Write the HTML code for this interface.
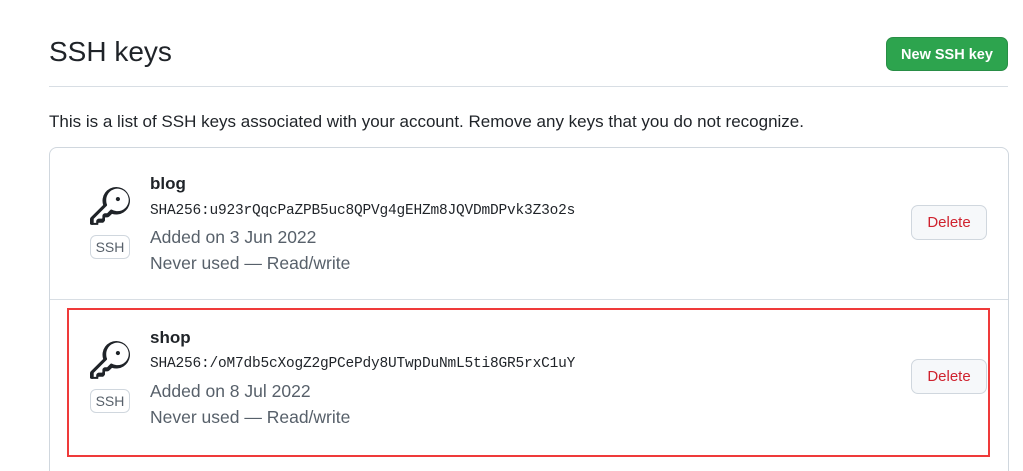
<!DOCTYPE html>
<html><head><style>
html,body{margin:0;background:#fff;font-family:"Liberation Sans",sans-serif;color:#1f2328;width:1023px;height:471px;overflow:hidden;position:relative}
.a{position:absolute}
h1{position:absolute;left:49px;top:36px;margin:0;font-weight:400;font-size:28px}
.btn{position:absolute;left:886px;top:37px;width:122px;height:34px;background:#2da44e;border-radius:7px;color:#fff;font-weight:bold;font-size:14.5px;text-align:center;line-height:34px;border:1px solid #298e46;box-sizing:border-box}
.hr{left:49px;top:86px;width:959px;height:1px;background:#d8dee4}
.p{left:49px;top:112px;font-size:17px}
.box{left:49px;top:147px;width:958px;height:340px;border:1px solid #d0d7de;border-radius:8px}
.sep{left:50px;top:299px;width:958px;height:1px;background:#d8dee4}
.name{font-weight:bold;font-size:17px}
.sha{font-family:"Liberation Mono",monospace;font-size:14.5px;letter-spacing:-0.2px}
.g{font-size:17.5px;color:#57606a}
.ssh{width:38px;height:22px;border:1px solid #d0d7de;border-radius:6px;font-size:14px;color:#57606a;text-align:center;line-height:22px}
.del{width:74px;height:33px;border:1px solid #d0d7de;border-radius:7px;background:#f6f8fa;color:#cf222e;font-size:15px;text-align:center;line-height:33px}
.red{left:67px;top:308px;width:919px;height:145px;border:2px solid #ef3a3a}
</style></head><body>
<h1>SSH keys</h1>
<div class="btn">New SSH key</div>
<div class="a hr"></div>
<div class="a p">This is a list of SSH keys associated with your account. Remove any keys that you do not recognize.</div>
<div class="a box"></div>
<div class="a sep"></div>
<svg class="a" style="left:90px;top:187px" width="40" height="40" viewBox="0 0 24 24"><path fill="#1f2328" d="M16.75 8.5a1.25 1.25 0 1 0 0-2.5 1.25 1.25 0 0 0 0 2.5Z"/><path fill="#1f2328" d="M15.75 0a8.25 8.25 0 1 1-2.541 16.101l-1.636 1.636a1.744 1.744 0 0 1-1.237.513H9.25a.25.25 0 0 0-.25.25v1.448a.876.876 0 0 1-.256.62l-.62.62a.876.876 0 0 1-.62.256H5.25a.25.25 0 0 0-.25.25v.75a.25.25 0 0 1-.25.25H1.75A1.75 1.75 0 0 1 0 22.25v-2.836c0-.464.185-.908.513-1.236l7.386-7.388A8.249 8.249 0 0 1 15.75 0ZM9.75 8.250c0 .797.155 1.556.437 2.251a.75.75 0 0 1-.165.819l-7.726 7.726a.248.248 0 0 0-.073.176v2.278h1.5v-.75c0-.966.784-1.75 1.75-1.75h1.688l.27-.27v-1.23c0-.966.784-1.75 1.750-1.75h1.086l.17-.17 1.826-1.825a.75.75 0 0 1 .819-.165A6.75 6.75 0 1 0 9.75 8.25Z"/></svg>
<div class="a ssh" style="left:90px;top:235px">SSH</div>
<div class="a name" style="left:150px;top:174px">blog</div>
<div class="a sha" style="left:150px;top:203px">SHA256:u923rQqcPaZPB5uc8QPVg4gEHZm8JQVDmDPvk3Z3o2s</div>
<div class="a g" style="left:150px;top:227px">Added on 3 Jun 2022</div>
<div class="a g" style="left:150px;top:253px">Never used — Read/write</div>
<div class="a del" style="left:911px;top:205px">Delete</div>
<svg class="a" style="left:90px;top:341px" width="40" height="40" viewBox="0 0 24 24"><path fill="#1f2328" d="M16.75 8.5a1.25 1.25 0 1 0 0-2.5 1.25 1.25 0 0 0 0 2.5Z"/><path fill="#1f2328" d="M15.75 0a8.25 8.25 0 1 1-2.541 16.101l-1.636 1.636a1.744 1.744 0 0 1-1.237.513H9.25a.25.25 0 0 0-.25.25v1.448a.876.876 0 0 1-.256.62l-.62.62a.876.876 0 0 1-.62.256H5.25a.25.25 0 0 0-.25.25v.75a.25.25 0 0 1-.25.25H1.75A1.75 1.75 0 0 1 0 22.25v-2.836c0-.464.185-.908.513-1.236l7.386-7.388A8.249 8.249 0 0 1 15.75 0ZM9.75 8.250c0 .797.155 1.556.437 2.251a.75.75 0 0 1-.165.819l-7.726 7.726a.248.248 0 0 0-.073.176v2.278h1.5v-.75c0-.966.784-1.75 1.75-1.75h1.688l.27-.27v-1.23c0-.966.784-1.75 1.750-1.75h1.086l.17-.17 1.826-1.825a.75.75 0 0 1 .819-.165A6.75 6.75 0 1 0 9.75 8.25Z"/></svg>
<div class="a ssh" style="left:90px;top:389px">SSH</div>
<div class="a name" style="left:150px;top:328px">shop</div>
<div class="a sha" style="left:150px;top:356px">SHA256:/oM7db5cXogZ2gPCePdy8UTwpDuNmL5ti8GR5rxC1uY</div>
<div class="a g" style="left:150px;top:381px">Added on 8 Jul 2022</div>
<div class="a g" style="left:150px;top:407px">Never used — Read/write</div>
<div class="a del" style="left:911px;top:359px">Delete</div>
<div class="a red"></div>
</body></html>
